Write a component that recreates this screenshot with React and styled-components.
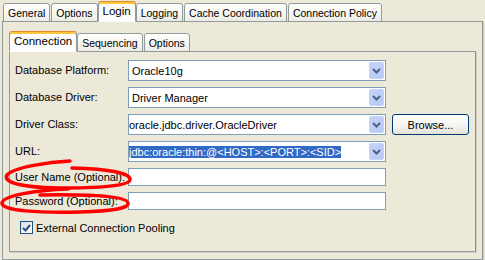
import styled, { createGlobalStyle } from "styled-components";

const GlobalStyle = createGlobalStyle`
  html, body {
    margin: 0;
    padding: 0;
    background: #ece9d8;
    font-family: "Liberation Sans", Tahoma, Arial, sans-serif;
    font-size: 11px;
    color: #000;
  }
`;

const Window = styled.div`
  position: relative;
  width: 485px;
  height: 260px;
  padding: 1px 2px 0 2px;
  box-sizing: border-box;
  display: flex;
  flex-direction: column;
`;

const TabRow = styled.div`
  display: flex;
  align-items: flex-end;
  padding-left: ${(p) => p.$indent || 1}px;
  height: ${(p) => p.$height}px;
  position: relative;
  z-index: 1;
  margin-bottom: -1px;
`;

const Tab = styled.div`
  box-sizing: border-box;
  height: ${(p) => (p.$active ? p.$h + 2 : p.$h)}px;
  padding: 0 ${(p) => p.$pad || 5}px ${(p) => (p.$active ? 2 : 0)}px;
  margin-right: ${(p) => (p.$active ? 0 : 1)}px;
  margin-left: ${(p) => (p.$active ? -1 : 0)}px;
  display: flex;
  align-items: center;
  justify-content: center;
  border: 1px solid #919b9c;
  border-bottom: ${(p) => (p.$active ? "1px solid #fcfcfe" : "1px solid #919b9c")};
  border-radius: 3px 3px 0 0;
  background: ${(p) =>
    p.$active ? "#fcfcfe" : "linear-gradient(#fefefe, #f4f3ee 70%, #ebeae3)"};
  box-shadow: ${(p) => (p.$active ? "inset 0 2px 0 #ffc83c" : "none")};
  border-top-color: ${(p) => (p.$active ? "#e68b2c" : "#919b9c")};
  font-size: ${(p) => (p.$active ? 11.5 : 10.5)}px;
  white-space: nowrap;
`;

const Panel = styled.div`
  box-sizing: border-box;
  border: 1px solid #919b9c;
  border-right-color: #8c9290;
  box-shadow: 1px 1px 0 #d0cec4;
  background: #ece9d8;
  flex: 1;
  display: flex;
  flex-direction: column;
  padding: ${(p) => p.$pad};
`;

const Form = styled.div`
  display: grid;
  grid-template-columns: 107px 258px 77px;
  column-gap: 6px;
  padding: 8px 0 0 5px;
  align-items: center;
`;

const Label = styled.div`
  grid-column: 1;
  height: ${(p) => p.$h}px;
  line-height: ${(p) => p.$h}px;
  margin-bottom: 6px;
  white-space: nowrap;
`;

const Combo = styled.div`
  grid-column: 2;
  box-sizing: border-box;
  height: 21px;
  margin-bottom: 6px;
  border: 1px solid #7f9db9;
  background: #fff;
  display: flex;
  align-items: center;
  padding: 0 1px 0 ${(p) => p.$indent}px;
`;

const ComboText = styled.span`
  flex: 1;
  white-space: nowrap;
  overflow: hidden;
`;

const Selected = styled.span`
  background: #316ac5;
  color: #fff;
  padding: 2px 0;
`;

const ArrowButton = styled.div`
  width: 15px;
  height: 17px;
  border-radius: 2px;
  background: linear-gradient(135deg, #c6d3f7, #b6c8f6);
  border: 1px solid #c3d3fd;
  box-sizing: border-box;
  display: flex;
  align-items: center;
  justify-content: center;
`;

const TextField = styled.div`
  grid-column: 2;
  box-sizing: border-box;
  height: 18px;
  margin-bottom: 6px;
  border: 1px solid #7f9db9;
  background: #fff;
`;

const Button = styled.div`
  grid-column: 3;
  box-sizing: border-box;
  height: 21px;
  margin-bottom: 6px;
  border: 1px solid #003c74;
  border-radius: 3px;
  background: linear-gradient(#fff, #f3f3ef 60%, #e3e2da);
  display: flex;
  align-items: center;
  justify-content: center;
`;

const CheckRow = styled.div`
  display: flex;
  align-items: center;
  gap: 3px;
  padding: 5px 0 0 10px;
`;

const Box = styled.div`
  width: 13px;
  height: 13px;
  box-sizing: border-box;
  border: 1px solid #1c5180;
  background: linear-gradient(135deg, #dcdcd7, #fff);
  display: flex;
  align-items: center;
  justify-content: center;
`;

const Marks = styled.svg`
  position: absolute;
  left: 0;
  top: 0;
  pointer-events: none;
`;

const Chevron = () => (
  <svg width="9" height="6" viewBox="0 0 9 6">
    <path d="M1 1 L4.5 4.5 L8 1" stroke="#4d6185" strokeWidth="2" fill="none" />
  </svg>
);

const outerTabs = ["General", "Options", "Login", "Logging", "Cache Coordination", "Connection Policy"];
const innerTabs = ["Connection", "Sequencing", "Options"];

const App = () => {
  return (
    <>
      <GlobalStyle />
      <Window>
        <TabRow $height={21} $indent={1}>
          {outerTabs.map((t) => (
            <Tab key={t} $h={19} $pad={4} $active={t === "Login"}>
              {t}
            </Tab>
          ))}
        </TabRow>
        <Panel $pad="9px 6px 7px 6px">
          <TabRow $height={21} $indent={0}>
            {innerTabs.map((t, i) => (
              <Tab key={t + i} $h={19} $pad={4} $active={i === 0}>
                {t}
              </Tab>
            ))}
          </TabRow>
          <Panel $pad="0">
            <Form>
              <Label $h={21}>Database Platform:</Label>
              <Combo $indent={3}>
                <ComboText>Oracle10g</ComboText>
                <ArrowButton><Chevron /></ArrowButton>
              </Combo>
              <div />
              <Label $h={21}>Database Driver:</Label>
              <Combo $indent={3}>
                <ComboText>Driver Manager</ComboText>
                <ArrowButton><Chevron /></ArrowButton>
              </Combo>
              <div />
              <Label $h={21}>Driver Class:</Label>
              <Combo $indent={0}>
                <ComboText>oracle.jdbc.driver.OracleDriver</ComboText>
                <ArrowButton><Chevron /></ArrowButton>
              </Combo>
              <Button>Browse...</Button>
              <Label $h={21}>URL:</Label>
              <Combo $indent={0}>
                <ComboText>
                  <Selected>jdbc:oracle:thin:@&lt;HOST&gt;:&lt;PORT&gt;:&lt;SID&gt;</Selected>
                </ComboText>
                <ArrowButton><Chevron /></ArrowButton>
              </Combo>
              <div />
              <Label $h={18}>User Name (Optional):</Label>
              <TextField />
              <div />
              <Label $h={18}>Password (Optional):</Label>
              <TextField />
              <div />
            </Form>
            <CheckRow>
              <Box>
                <svg width="9" height="8" viewBox="0 0 9 8">
                  <path d="M1 4 L3.5 6.5 L8 1" stroke="#2a4f8f" strokeWidth="2" fill="none" />
                </svg>
              </Box>
              External Connection Pooling
            </CheckRow>
          </Panel>
        </Panel>
        <Marks width="485" height="260" viewBox="0 0 485 260">
          <path
            d="M70 161 C50 162 14 167 7 175 C2 183 25 188 65 188 C105 188 129 185 130 180 C131 173 110 169 72 168"
            stroke="#f00" strokeWidth="3.5" fill="none" strokeLinecap="round"
          />
          <path
            d="M68 189 C40 190 3 195 2 203 C1 211 40 213 80 212 C115 211 129 208 128 203 C127 197 100 194 40 195"
            stroke="#f00" strokeWidth="3.5" fill="none" strokeLinecap="round"
          />
        </Marks>
      </Window>
    </>
  );
};

export default App;
